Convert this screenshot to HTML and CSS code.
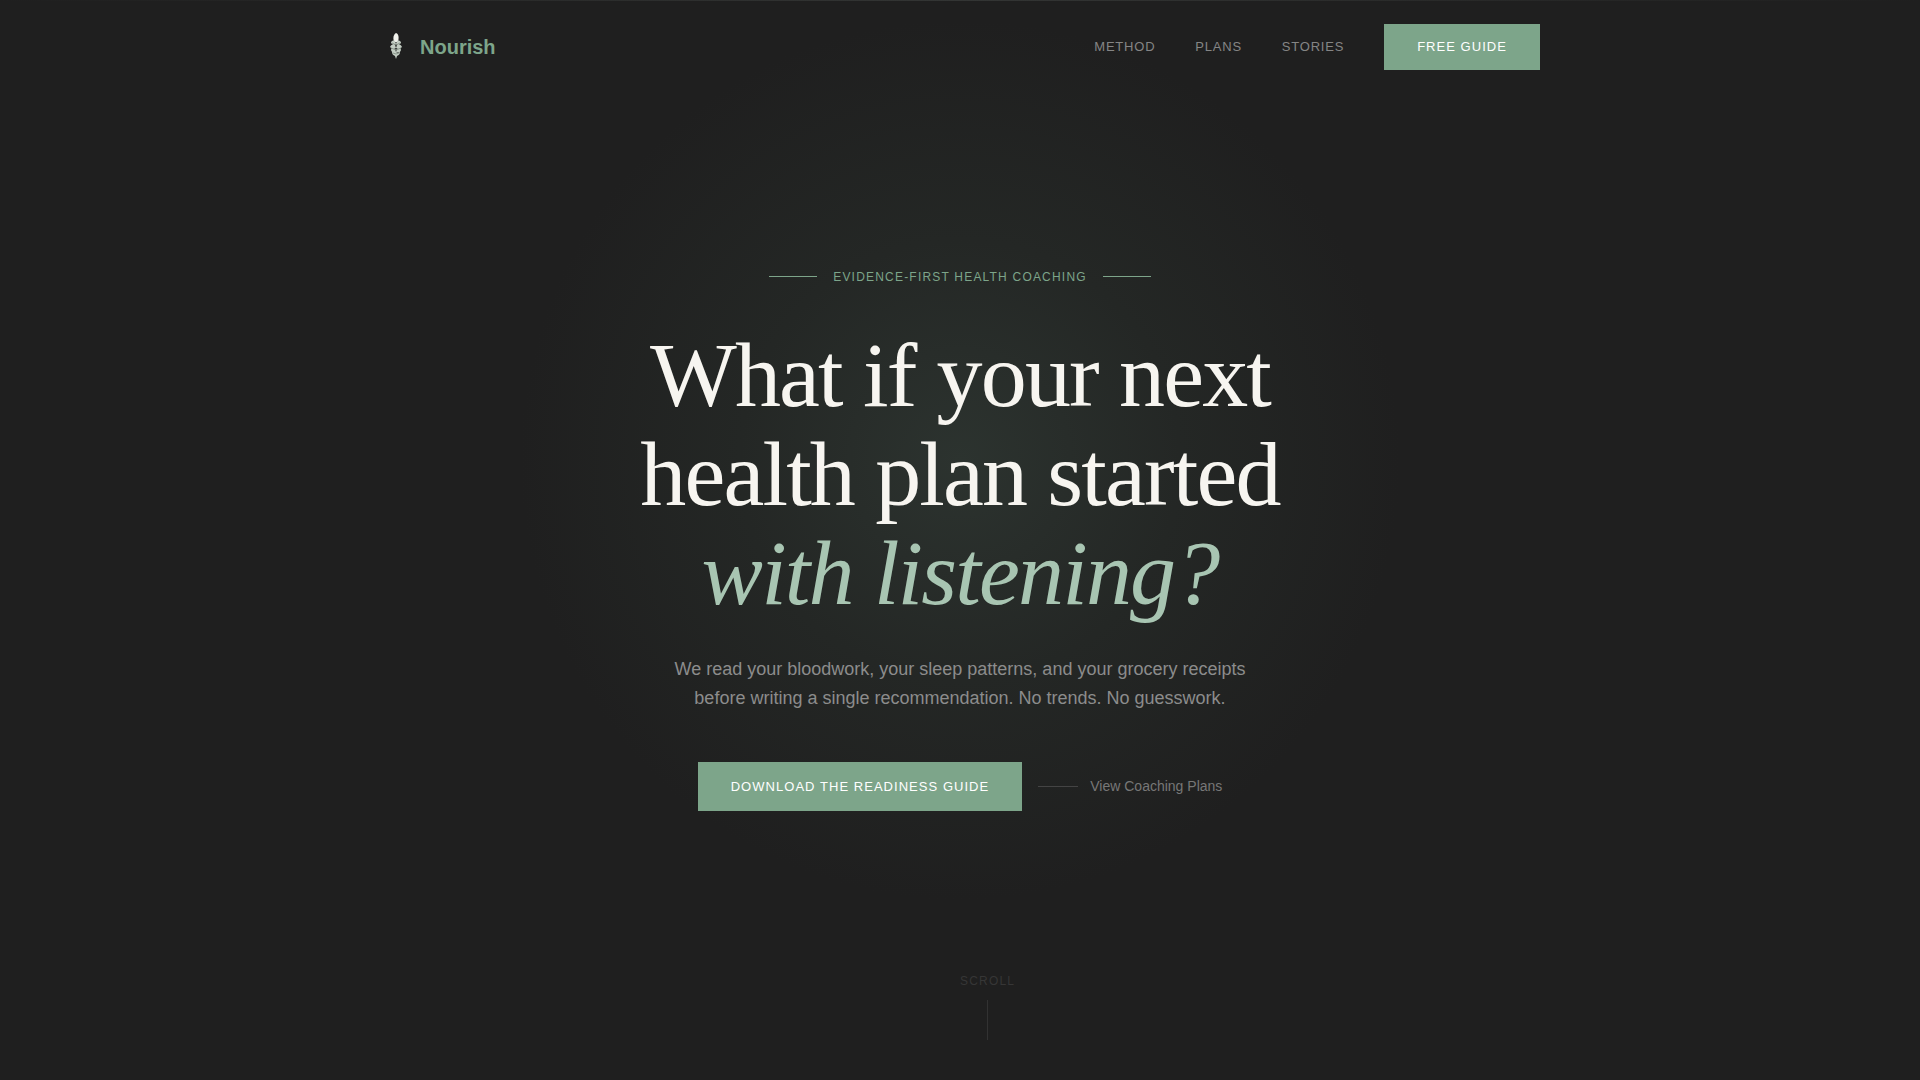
FILE: index.html
```html
<!DOCTYPE html>
<html lang="en">
<head>
<meta charset="utf-8">
<meta name="viewport" content="width=device-width, initial-scale=1">
<title>Nourish</title>
<link rel="stylesheet" href="styles.css">
</head>
<body>
<header class="site-header">
  <a class="brand" href="#">
    <svg class="brand-mark" viewBox="0 0 32 32" aria-hidden="true">
      <path class="leaf-light" d="M16 2c3 1 3 5 2 9h-4c-1-4-1-7 2-9z"/>
      <path class="leaf-mid" d="M15 10c-2-1-4 0-4 2 2 2 3 2 5 1zM17 10c2-1 4 0 4 2-2 2-3 2-5 1zM15 14c-3-1-4 0-5 2 2 2 4 2 6 1zM17 14c3-1 4 0 5 2-2 2-4 2-6 1zM15 18c-3-1-4 0-4 1 1 3 3 3 5 2zM17 18c3-1 4 0 4 1-1 3-3 3-5 2zM14 21h-2c0 2 1 3 3 4l1 3 1-3c2-1 3-2 3-4h-2z"/>
      <path class="leaf-vein" d="M12 12l4 2 4-2M11 17l5 2 5-2M13 22l3 1 3-1"/>
    </svg>
    <span>Nourish</span>
  </a>
  <nav class="site-nav">
    <a class="nav-link" href="#method">Method</a>
    <a class="nav-link" href="#plans">Plans</a>
    <a class="nav-link" href="#stories">Stories</a>
    <a class="button button-nav" href="#guide">Free Guide</a>
  </nav>
</header>
<main class="hero">
  <div class="hero-content">
    <p class="eyebrow">Evidence-First Health Coaching</p>
    <h1 class="headline">What if your next<br>health plan started<br><em>with listening?</em></h1>
    <p class="lead">We read your bloodwork, your sleep patterns, and your grocery receipts before writing a single recommendation. No trends. No guesswork.</p>
    <div class="actions">
      <a class="button" href="#guide">Download the Readiness Guide</a>
      <a class="text-link" href="#plans">View Coaching Plans</a>
    </div>
  </div>
  <div class="scroll-hint">Scroll</div>
</main>
</body>
</html>
```

FILE: styles.css
```css
* {
  box-sizing: border-box;
}

body {
  margin: 0;
  min-height: 100vh;
  display: flex;
  flex-direction: column;
  background:
    linear-gradient(90deg, transparent, #333534, transparent) top / 100% 1px no-repeat,
    radial-gradient(circle 440px at 50% 460px, #2c332f, #242725 50%, #1f1f1f) #1f1f1f;
  color: #f7f5f0;
  font-family: "Liberation Sans", Arial, sans-serif;
}

a {
  color: inherit;
  text-decoration: none;
}

.site-header {
  width: 100%;
  max-width: 1200px;
  margin: 0 auto;
  padding: 24px 20px;
  display: flex;
  align-items: center;
  justify-content: space-between;
}

.brand {
  display: flex;
  align-items: center;
  gap: 8px;
  color: #7da58a;
  font-size: 20px;
  font-weight: 700;
}

.brand-mark {
  width: 32px;
  height: 32px;
}

.leaf-light {
  fill: #f1f2ec;
}

.leaf-mid {
  fill: #c3cdc3;
}

.leaf-vein {
  fill: none;
  stroke: #8b988c;
}

.site-nav {
  display: flex;
  align-items: center;
  gap: 40px;
}

.nav-link {
  color: #858585;
  font-size: 13px;
  line-height: 14px;
  letter-spacing: 0.06em;
  text-transform: uppercase;
}

.button {
  padding: 17px 33px;
  background: #7da58a;
  color: #fff;
  font-size: 13px;
  line-height: 15px;
  letter-spacing: 0.08em;
  text-transform: uppercase;
}

.button-nav {
  padding: 16px 33px;
  line-height: 14px;
}

.hero {
  flex: 1;
  display: flex;
  flex-direction: column;
}

.hero-content {
  flex: 1;
  display: flex;
  flex-direction: column;
  align-items: center;
  justify-content: center;
  padding: 10px 20px 0;
  text-align: center;
}

.eyebrow {
  display: flex;
  align-items: center;
  gap: 16px;
  margin: 0 0 40px;
  color: #7da58a;
  font-size: 12px;
  line-height: 18px;
  letter-spacing: 0.1em;
  text-transform: uppercase;
}

.eyebrow::before,
.eyebrow::after {
  content: "";
  width: 48px;
  height: 1px;
  background: #7da58a;
}

.headline {
  margin: 0 0 32px;
  font-family: "Liberation Serif", "Times New Roman", serif;
  font-size: 92px;
  font-weight: 400;
  line-height: 99px;
  letter-spacing: -0.02em;
}

.headline em {
  color: #a8c5b2;
}

.lead {
  max-width: 600px;
  margin: 0 0 49px;
  color: #8c8c8c;
  font-size: 18px;
  line-height: 29px;
}

.actions {
  display: flex;
  align-items: center;
  gap: 16px;
}

.text-link {
  display: flex;
  align-items: center;
  gap: 12px;
  color: #777;
  font-size: 14px;
}

.text-link::before {
  content: "";
  width: 40px;
  height: 1px;
  background: #444;
}

.scroll-hint {
  align-self: flex-start;
  display: flex;
  flex-direction: column;
  align-items: center;
  gap: 12px;
  margin: 0 0 40px 50%;
  color: #363636;
  font-size: 12px;
  line-height: 14px;
  letter-spacing: 0.1em;
  text-transform: uppercase;
}

.scroll-hint::after {
  content: "";
  width: 1px;
  height: 40px;
  background: #323232;
}
```
